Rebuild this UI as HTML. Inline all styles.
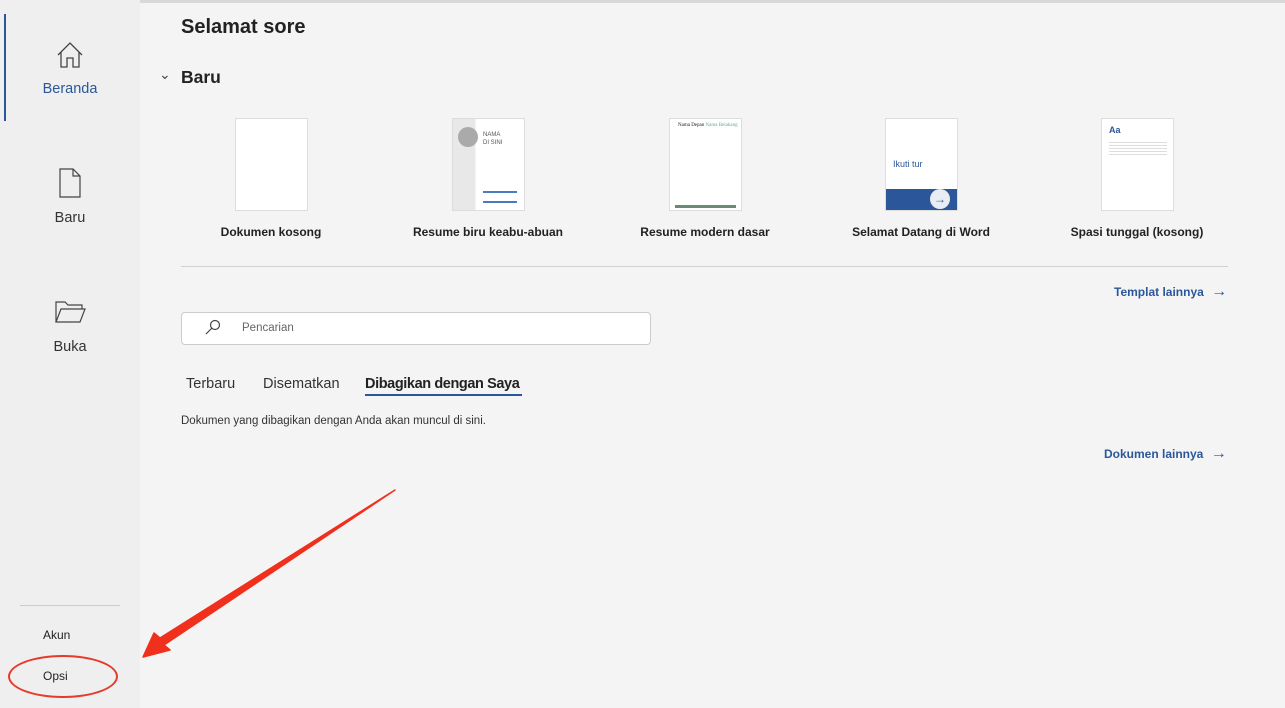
<!DOCTYPE html><html><head><style>
body{margin:0;width:1285px;height:708px;overflow:hidden;font-family:"Liberation Sans",sans-serif;background:#f4f4f4;position:relative;color:#222}
.a{position:absolute}
.side{left:0;top:0;width:140px;height:708px;background:#efefef}
.nav{width:140px;text-align:center;font-size:14.5px;color:#333}
.th{background:#fff;border:1px solid #ddd;width:71px;height:91px;top:118px}
.lbl{top:225px;font-size:12px;font-weight:bold;color:#222;text-align:center;width:200px}
.lnk{font-size:12px;font-weight:bold;color:#2b579a}
</style></head><body>
<div class="a" style="left:0;top:0;width:1285px;height:3px;background:#d8d8d8"></div>
<div class="a side"></div>
<div class="a" style="left:4px;top:14px;width:2px;height:107px;background:#2b579a"></div>
<svg class="a" style="left:55px;top:40px" width="30" height="30" viewBox="0 0 30 30" fill="none" stroke="#444" stroke-width="1.3"><path d="M3 15 L15 3 L27 15 M6 12 V27 H12 V18 H18 V27 H24 V12"/></svg>
<div class="a nav" style="top:81px;color:#2b579a">Beranda</div>
<svg class="a" style="left:58px;top:168px" width="24" height="30" viewBox="0 0 24 30" fill="none" stroke="#444" stroke-width="1.2"><path d="M2 1 H15 L22 8 V29 H2 Z M15 1 V8 H22"/></svg>
<div class="a nav" style="top:210px">Baru</div>
<svg class="a" style="left:54px;top:300px" width="32" height="24" viewBox="0 0 32 24" fill="none" stroke="#444" stroke-width="1.2"><path d="M2 22 V2 H11 L14 5 H28 V9 M2 22 L7 9 H31 L26 22 Z"/></svg>
<div class="a nav" style="top:339px">Buka</div>
<div class="a" style="left:20px;top:605px;width:100px;height:1px;background:#ccc"></div>
<div class="a" style="left:43px;top:628px;font-size:12px">Akun</div>
<div class="a" style="left:43px;top:669px;font-size:12px">Opsi</div>
<div class="a" style="left:8px;top:655px;width:106px;height:39px;border:2.5px solid #e63a2a;border-radius:50%"></div>
<svg class="a" style="left:0;top:0" width="1285" height="708"><path d="M395 490 L160 638 L154 633 L143 657 L170 650 L164 645 Z" fill="#f0301c" stroke="#f0301c" stroke-width="1.5" stroke-linejoin="round"/></svg>
<div class="a" style="left:181px;top:16px;font-size:20px;font-weight:bold;color:#222">Selamat sore</div>
<div class="a" style="left:159px;top:66px;font-size:14px;color:#444">⌄</div>
<div class="a" style="left:181px;top:67px;font-size:17.5px;font-weight:bold">Baru</div>
<div class="a th" style="left:235px"></div>
<div class="a th" style="left:452px;background:linear-gradient(90deg,#e8e8e8 0 32%,#fff 32%)"><div class="a" style="left:5px;top:8px;width:20px;height:20px;border-radius:50%;background:#aaa"></div><div class="a" style="left:30px;top:12px;font-size:6px;color:#555;line-height:8px">NAMA<br>DI SINI</div><div class="a" style="left:30px;top:72px;width:34px;height:8px;border-top:2px solid #4a7bc0;border-bottom:2px solid #4a7bc0"></div></div>
<div class="a th" style="left:669px"><div class="a" style="left:8px;top:4px;font-size:5px;font-family:'Liberation Serif';line-height:6px">Nama Depan <span style="color:#6a9">Nama Belakang</span></div><div class="a" style="left:5px;top:86px;width:61px;height:3px;background:#6b8a75"></div></div>
<div class="a th" style="left:885px"><div class="a" style="left:7px;top:40px;font-size:9px;color:#2b579a">Ikuti tur</div><div class="a" style="left:0;top:70px;width:71px;height:21px;background:#2b579a"></div><div class="a" style="left:44px;top:70px;width:20px;height:20px;border-radius:50%;background:#e8ecf3;color:#2b579a;font-size:12px;text-align:center;line-height:20px;font-weight:bold">→</div></div>
<div class="a th" style="left:1101px"><div class="a" style="left:7px;top:6px;font-size:9px;font-weight:bold;color:#2b579a">Aa</div><div class="a" style="left:7px;top:21px;width:58px;height:16px;background:repeating-linear-gradient(#fff 0 2px,#ddd 2px 3px)"></div></div>
<div class="a lbl" style="left:171px">Dokumen kosong</div>
<div class="a lbl" style="left:388px">Resume biru keabu-abuan</div>
<div class="a lbl" style="left:605px">Resume modern dasar</div>
<div class="a lbl" style="left:821px">Selamat Datang di Word</div>
<div class="a lbl" style="left:1037px">Spasi tunggal (kosong)</div>
<div class="a" style="left:181px;top:266px;width:1047px;height:1px;background:#d0d0d0"></div>
<div class="a lnk" style="left:1114px;top:283px">Templat lainnya <span style="font-weight:normal;font-size:16px;margin-left:4px">→</span></div>
<div class="a" style="left:181px;top:312px;width:468px;height:31px;background:#fff;border:1px solid #ccc;border-radius:4px"></div>
<svg class="a" style="left:205px;top:319px" width="16" height="16" viewBox="0 0 16 16" fill="none" stroke="#444" stroke-width="1.2"><circle cx="10" cy="6" r="4.5"/><path d="M7 9 L1 15"/></svg>
<div class="a" style="left:242px;top:322px;font-size:11.5px;color:#666">Pencarian</div>
<div class="a" style="left:186px;top:376px;font-size:14.5px;color:#333">Terbaru</div>
<div class="a" style="left:263px;top:376px;font-size:14.5px;color:#333">Disematkan</div>
<div class="a" style="left:365px;top:376px;font-size:14.5px;color:#222;font-weight:bold;letter-spacing:-0.4px">Dibagikan dengan Saya</div>
<div class="a" style="left:365px;top:394px;width:157px;height:2px;background:#2b579a"></div>
<div class="a" style="left:181px;top:415px;font-size:11.5px;color:#333">Dokumen yang dibagikan dengan Anda akan muncul di sini.</div>
<div class="a lnk" style="left:1104px;top:445px">Dokumen lainnya <span style="font-weight:normal;font-size:16px;margin-left:4px">→</span></div>
</body></html>
